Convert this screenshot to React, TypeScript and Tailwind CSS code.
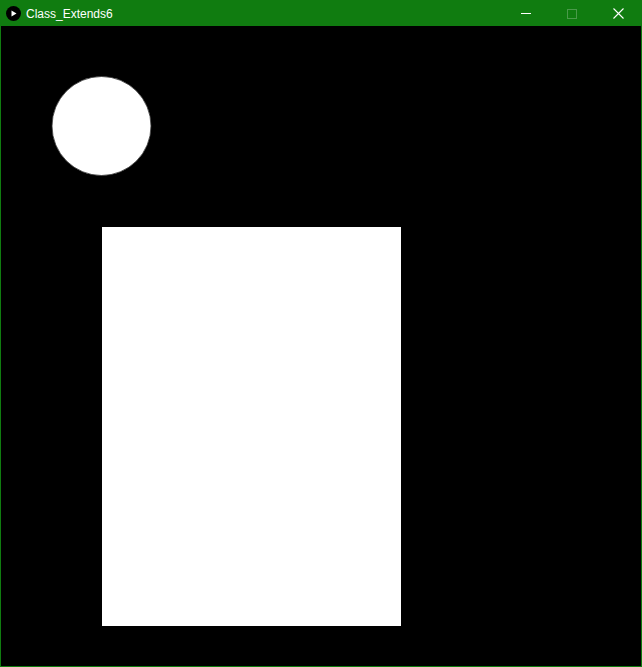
export default function App() {
  return (
    <div className="flex h-[667px] w-[642px] flex-col border border-[#107c10] bg-black font-['Liberation_Sans',sans-serif]">
      <header className="flex h-[25px] shrink-0 items-center bg-[#107c10] text-white">
        <div className="ml-[5px] flex h-[15px] w-[15px] items-center justify-center rounded-full bg-black">
          <svg width="6" height="7" viewBox="0 0 6 7">
            <path d="M0.5 0.5 L5.5 3.5 L0.5 6.5 Z" fill="white" />
          </svg>
        </div>
        <span className="ml-[5px] text-[12px] leading-none">Class_Extends6</span>
        <div className="ml-auto flex h-full items-center">
          <div className="flex h-full w-[46px] items-center justify-center">
            <div className="h-px w-[10px] bg-white" />
          </div>
          <div className="flex h-full w-[46px] items-center justify-center">
            <div className="h-[10px] w-[10px] border border-[#4a9a4a]" />
          </div>
          <div className="flex h-full w-[46px] items-center justify-center">
            <svg width="11" height="11" viewBox="0 0 11 11">
              <path d="M0.5 0.5 L10.5 10.5 M10.5 0.5 L0.5 10.5" stroke="white" strokeWidth="1.1" />
            </svg>
          </div>
        </div>
      </header>
      <main className="h-[640px] w-[640px] bg-black">
        <svg width="640" height="640" viewBox="0 0 640 640" className="block">
          <circle cx="100.5" cy="100" r="49.5" fill="white" stroke="#333" strokeWidth="0.8" />
          <rect x="101" y="201" width="299" height="399" fill="white" />
        </svg>
      </main>
    </div>
  );
}
